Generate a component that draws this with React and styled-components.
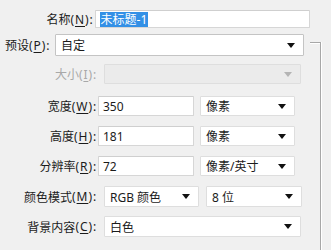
import React from 'react';
import styled, { createGlobalStyle } from 'styled-components';

const GlobalStyle = createGlobalStyle`
    body {
        margin: 0;
        background: #f0f0f0;
        font-family: "Noto Sans", "Noto Sans CJK SC", sans-serif;
        font-size: 12px;
        color: #1b1b1b;
    }
`

const Arrow = ({ disabled }) => (
    <svg width="8" height="5" viewBox="0 0 8 5">
        <path d="M0 0 H8 L4 5 Z" fill={disabled ? '#b4b4b4' : '#111'} />
    </svg>
);

// shortcut part of a label, e.g. "(N):" with the letter underlined
const Key = ({ children }) => <Hint>(<u>{children}</u>):</Hint>;

const App = () => {
    return (
        <>
            <GlobalStyle />
            <Page>
                <Form>
                    <Row $top={10} $height={18}>
                        <Label>名称<Key>N</Key></Label>
                        <TextBox $width={223}>
                            <Selected>未标题-1</Selected>
                        </TextBox>
                    </Row>

                    <PresetRow>
                        <PresetLabel>预设<Key>P</Key></PresetLabel>
                        <Select $width={249} $height={22} $strong>
                            <span>自定</span>
                            <Arrow />
                        </Select>
                    </PresetRow>

                    <Row $top={8} $height={20}>
                        <Label $disabled>大小<Key>I</Key></Label>
                        <Select $width={197} $disabled>
                            <span />
                            <Arrow disabled />
                        </Select>
                    </Row>

                    <Row $top={12} $height={20}>
                        <Label>宽度<Key>W</Key></Label>
                        <TextBox $width={96}>350</TextBox>
                        <Select $width={95}>
                            <span>像素</span>
                            <Arrow />
                        </Select>
                    </Row>

                    <Row $top={10} $height={20}>
                        <Label>高度<Key>H</Key></Label>
                        <TextBox $width={96}>181</TextBox>
                        <Select $width={95}>
                            <span>像素</span>
                            <Arrow />
                        </Select>
                    </Row>

                    <Row $top={10} $height={20}>
                        <Label>分辨率<Key>R</Key></Label>
                        <TextBox $width={96}>72</TextBox>
                        <Select $width={95}>
                            <span>像素/英寸</span>
                            <Arrow />
                        </Select>
                    </Row>

                    <Row $top={10} $height={21}>
                        <Label>颜色模式<Key>M</Key></Label>
                        <Select $width={95}>
                            <span>RGB 颜色</span>
                            <Arrow />
                        </Select>
                        <Select $width={96} $gap={7}>
                            <span>8 位</span>
                            <Arrow />
                        </Select>
                    </Row>

                    <Row $top={9} $height={21}>
                        <Label>背景内容<Key>C</Key></Label>
                        <Select $width={197}>
                            <span>白色</span>
                            <Arrow />
                        </Select>
                    </Row>
                </Form>
                <GroupEdge />
            </Page>
        </>
    );
};

export default App;

const Page = styled.div`
    display: flex;
    width: 331px;
    height: 250px;
    overflow: hidden;
`

const Form = styled.div`
    display: flex;
    flex-direction: column;
    width: 310px;
`

const Row = styled.div`
    display: flex;
    align-items: stretch;
    height: ${p => p.$height}px;
    margin-top: ${p => p.$top}px;
`

const Label = styled.label`
    width: 98px;
    padding-right: 1px;
    box-sizing: border-box;
    display: flex;
    align-items: center;
    justify-content: flex-end;
    white-space: nowrap;
    color: ${p => p.$disabled ? '#a8a8a8' : '#1b1b1b'};
`

const Hint = styled.span`
    letter-spacing: 0.9px;

    u {
        text-decoration-thickness: 1px;
        text-underline-offset: 2px;
    }
`

const PresetRow = styled.div`
    display: flex;
    align-items: stretch;
    height: 22px;
    margin-top: 6px;
    padding-left: 5px;
`

const PresetLabel = styled(Label)`
    width: 50px;
    justify-content: flex-start;
    padding-right: 0;
`

const TextBox = styled.div`
    width: ${p => p.$width}px;
    box-sizing: border-box;
    display: flex;
    align-items: center;
    padding-left: 4px;
    background: #fff;
    border: 1px solid #d6d6d6;
    border-top-color: #cfcfcf;
    border-radius: 1px;
`

const Selected = styled.span`
    background: #3390e6;
    color: #fff;
    padding: 0 1px;
    line-height: 15px;
`

const Select = styled.div`
    width: ${p => p.$width}px;
    height: ${p => p.$height ? `${p.$height}px` : 'auto'};
    margin-left: ${p => p.$gap ?? 6}px;
    box-sizing: border-box;
    display: flex;
    align-items: center;
    justify-content: space-between;
    padding: 0 8px 0 5px;
    background: ${p => p.$disabled ? '#ebebeb' : '#fff'};
    border: 1px solid ${p => p.$strong ? '#c4c4c4' : '#dedede'};
    border-radius: 1px;

    ${PresetRow} & {
        margin-left: 0;
    }
`

const GroupEdge = styled.div`
    margin-top: 42px;
    width: 10px;
    height: 230px;
    border-top: 1px solid #a7a7a7;
    border-right: 1px solid #a7a7a7;
    box-shadow: inset 0 1px 0 #fff, 1px 0 0 #fff;
`
